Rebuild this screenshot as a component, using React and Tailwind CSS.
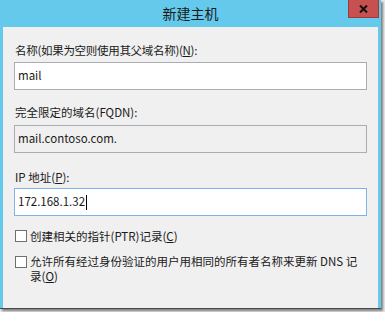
export default function App() {
  const font = { fontFamily: '"Noto Sans CJK SC", "Noto Sans", sans-serif' };
  return (
    <div className="w-[385px] h-[312px] bg-[#e8e8e8] overflow-hidden" style={font}>
      <div className="w-[381px] h-[309px] bg-[#64c9ea] flex flex-col shadow-[2px_2px_2px_rgba(0,0,0,0.45)] border-b border-[#4a4a4a]">
        <div className="h-[27px] flex items-start relative">
          <div className="flex-1 text-center text-[14px] leading-[27px] text-[#1a1a1a]">新建主机</div>
          <div className="absolute right-[2px] top-0 w-[31px] h-[18px] bg-[#c75050] border border-[#a33a3a] border-t-0 flex items-center justify-center">
            <svg width="9" height="8" viewBox="0 0 9 8">
              <path d="M1 0.5 L8 7.5 M8 0.5 L1 7.5" stroke="#111" strokeWidth="2" />
            </svg>
          </div>
        </div>
        <div className="flex-1 mx-[3px] bg-[#f0f0f0] px-[11px] pt-[15px] text-[11.5px] text-[#1a1a1a] flex flex-col">
          <div className="leading-[16px] pl-[1px] mb-[4px] tracking-[-0.3px]">
            名称(如果为空则使用其父域名称)(<span className="underline">N</span>):
          </div>
          <div className="h-[28px] bg-white border border-[#abadb3] flex items-center px-[3px]">mail</div>
          <div className="leading-[16px] pl-[1px] mt-[14px] mb-[5px]">完全限定的域名(FQDN):</div>
          <div className="h-[28px] bg-[#f0f0f0] border border-[#abadb3] flex items-center px-[3px]">mail.contoso.com.</div>
          <div className="leading-[16px] pl-[1px] mt-[16px] mb-[3px]">
            IP 地址(<span className="underline">P</span>):
          </div>
          <div className="h-[28px] bg-white border border-[#7eb4ea] flex items-center px-[3px]">
            <span>172.168.1.32</span>
            <span className="w-px h-[15px] bg-black ml-[1px]"></span>
          </div>
          <div className="flex items-start mt-[12px] pl-[1px]">
            <div className="w-[12px] h-[12px] mt-[2px] bg-white border border-[#707070] shrink-0"></div>
            <div className="ml-[3px] leading-[16px]">
              创建相关的指针(PTR)记录(<span className="underline">C</span>)
            </div>
          </div>
          <div className="flex items-start mt-[10px] pl-[1px]">
            <div className="w-[12px] h-[12px] mt-[2px] bg-white border border-[#707070] shrink-0"></div>
            <div className="ml-[3px] leading-[15px] whitespace-nowrap">
              允许所有经过身份验证的用户用相同的所有者名称来更新 DNS 记
              <br />
              录(<span className="underline">O</span>)
            </div>
          </div>
        </div>
      </div>
    </div>
  );
}
